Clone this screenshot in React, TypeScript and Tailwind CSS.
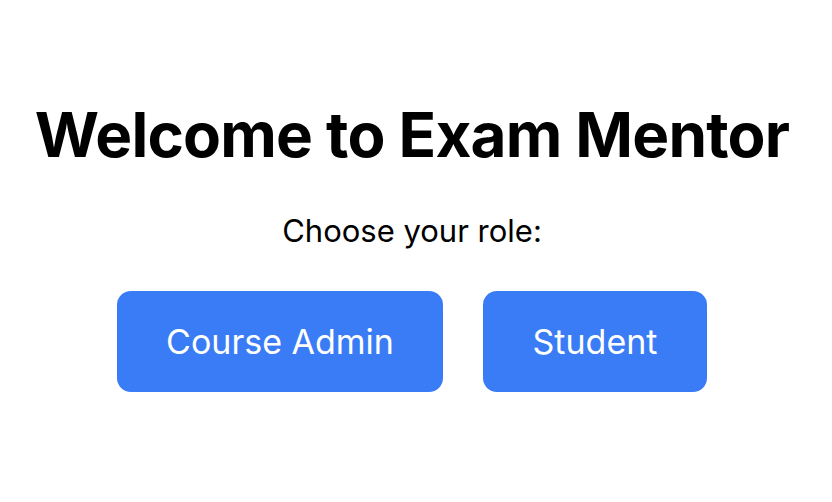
import React from "react";

export default function App() {
  return (
    <div className="w-[832px] h-[502px] bg-white">
      <div
        className="w-[824px] h-[502px] flex flex-col items-center pt-[97px] text-black"
        style={{ fontFamily: "Inter, 'Noto Sans', sans-serif" }}
      >
        <h1 className="text-[62px] font-bold leading-[76px] tracking-[-0.8px]">Welcome to Exam Mentor</h1>
        <p className="mt-[40px] text-[31px] leading-[36px]">Choose your role:</p>
        <div className="mt-[42px] flex gap-[40px]">
          <button className="h-[101px] w-[326px] rounded-[14px] bg-[#3a7cf6] text-white text-[34px]">
            Course Admin
          </button>
          <button className="h-[101px] w-[224px] rounded-[14px] bg-[#3a7cf6] text-white text-[34px]">
            Student
          </button>
        </div>
      </div>
    </div>
  );
}
